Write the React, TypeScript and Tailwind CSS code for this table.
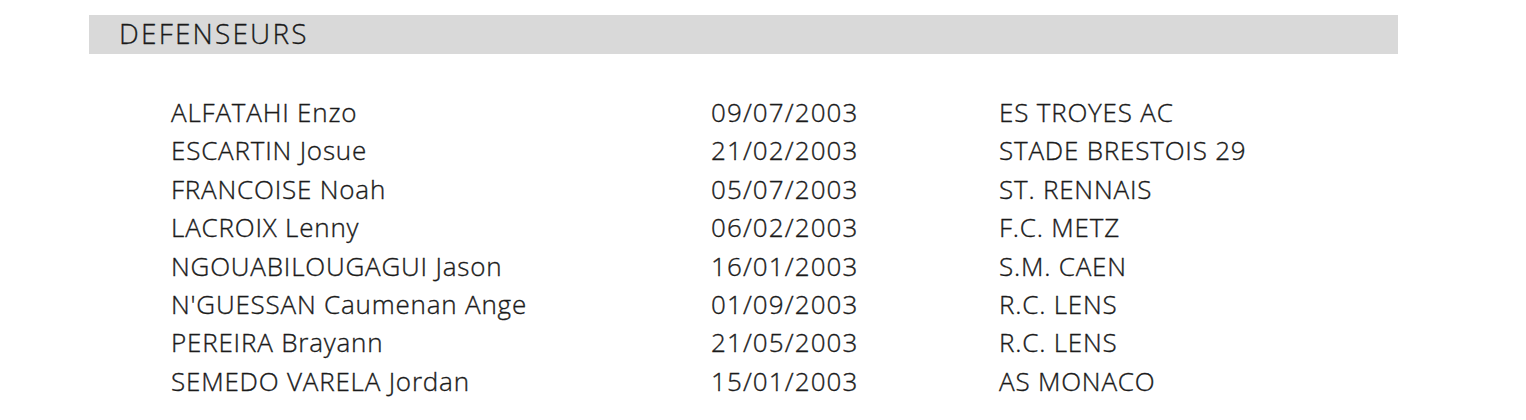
import React from "react";

const rows = [
  ["ALFATAHI Enzo", "09/07/2003", "ES TROYES AC"],
  ["ESCARTIN Josue", "21/02/2003", "STADE BRESTOIS 29"],
  ["FRANCOISE Noah", "05/07/2003", "ST. RENNAIS"],
  ["LACROIX Lenny", "06/02/2003", "F.C. METZ"],
  ["NGOUABILOUGAGUI Jason", "16/01/2003", "S.M. CAEN"],
  ["N'GUESSAN Caumenan Ange", "01/09/2003", "R.C. LENS"],
  ["PEREIRA Brayann", "21/05/2003", "R.C. LENS"],
  ["SEMEDO VARELA Jordan", "15/01/2003", "AS MONACO"],
];

export default function App() {
  return (
    <div className="w-[1526px] h-[420px] bg-white text-[#1a1a1a] font-['Open_Sans',sans-serif] font-light overflow-hidden">
      <div className="pt-[15px] pl-[89px]">
        <div className="w-[1309px] h-[39px] bg-[#d9d9d9] pl-[30px] flex items-center text-[28px] tracking-[2.2px] leading-none pb-[3px] [-webkit-text-stroke:0.3px_#1a1a1a]">
          DEFENSEURS
        </div>
      </div>
      <div className="pt-[39px] pl-[171px] text-[26px] tracking-[0.8px] leading-[38.4px] [-webkit-text-stroke:0.35px_#1a1a1a]">
        {rows.map((r) => (
          <div key={r[0]} className="flex">
            <div className="w-[540px]">{r[0]}</div>
            <div className="w-[288px] tracking-[1.1px]">{r[1]}</div>
            <div>{r[2]}</div>
          </div>
        ))}
      </div>
    </div>
  );
}
